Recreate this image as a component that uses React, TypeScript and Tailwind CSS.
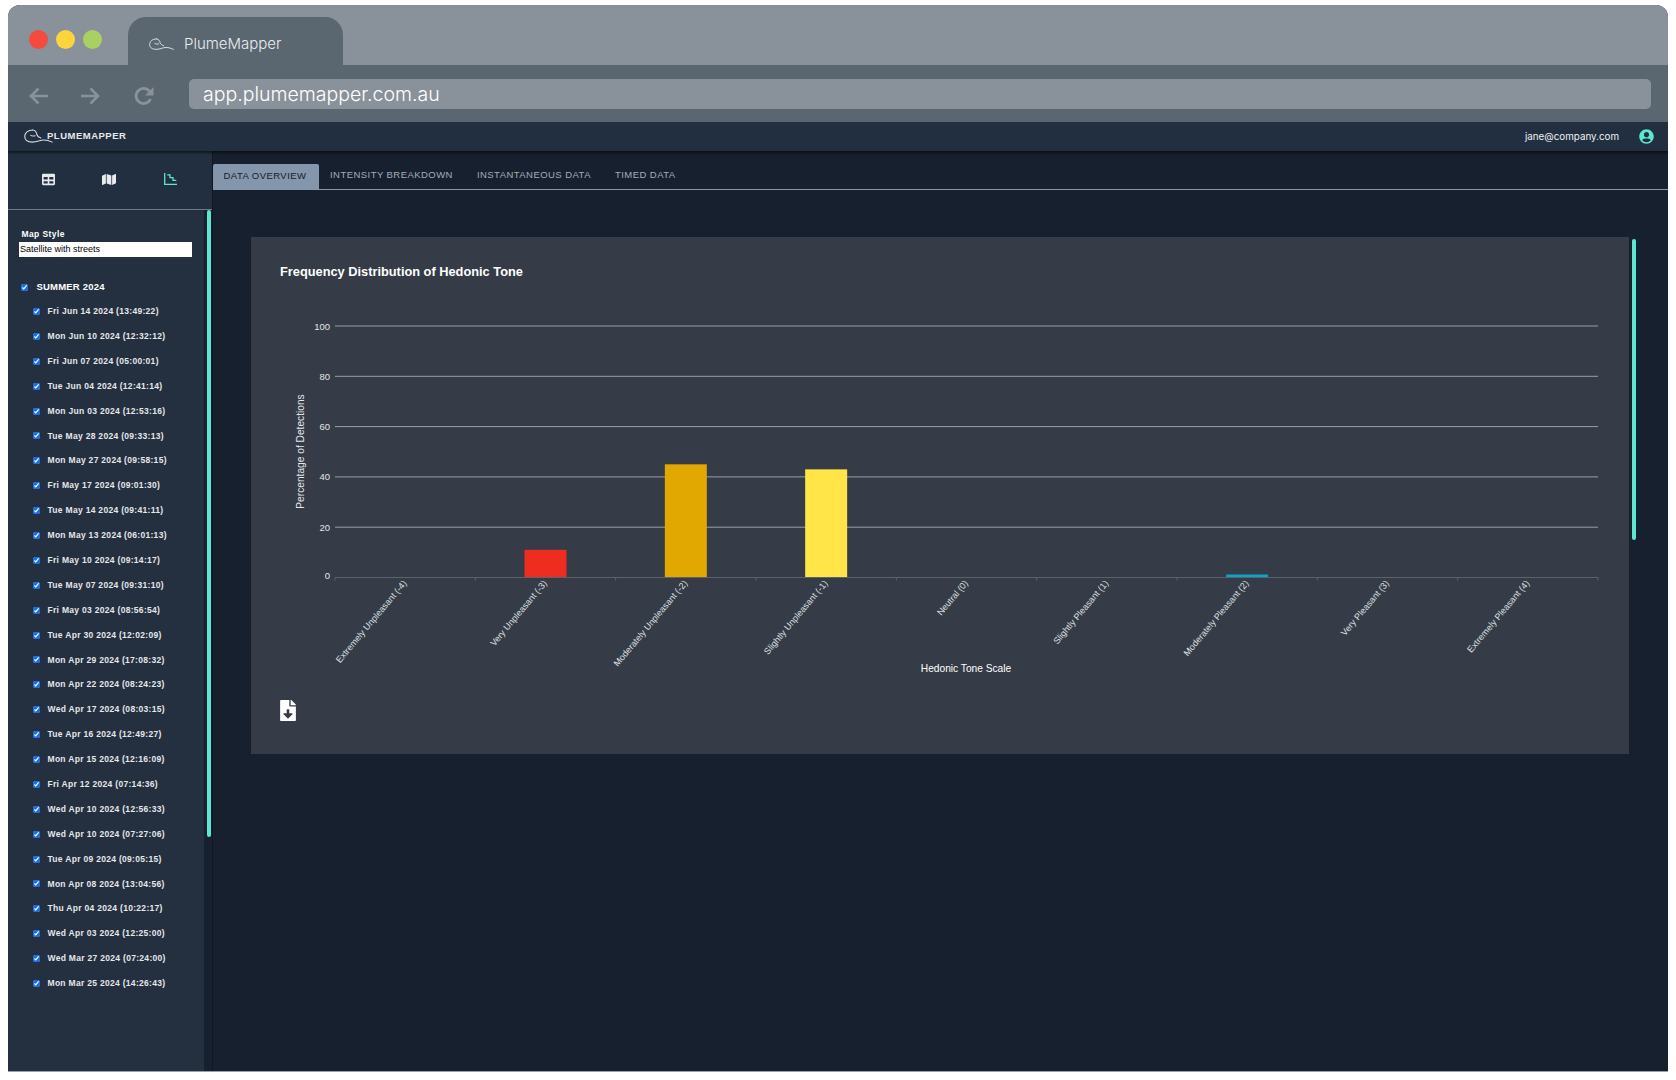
import React from "react";
import { FaTable, FaMap, FaFileDownload, FaUserCircle } from "react-icons/fa";

const dates = [
  "Fri Jun 14 2024 (13:49:22)",
  "Mon Jun 10 2024 (12:32:12)",
  "Fri Jun 07 2024 (05:00:01)",
  "Tue Jun 04 2024 (12:41:14)",
  "Mon Jun 03 2024 (12:53:16)",
  "Tue May 28 2024 (09:33:13)",
  "Mon May 27 2024 (09:58:15)",
  "Fri May 17 2024 (09:01:30)",
  "Tue May 14 2024 (09:41:11)",
  "Mon May 13 2024 (06:01:13)",
  "Fri May 10 2024 (09:14:17)",
  "Tue May 07 2024 (09:31:10)",
  "Fri May 03 2024 (08:56:54)",
  "Tue Apr 30 2024 (12:02:09)",
  "Mon Apr 29 2024 (17:08:32)",
  "Mon Apr 22 2024 (08:24:23)",
  "Wed Apr 17 2024 (08:03:15)",
  "Tue Apr 16 2024 (12:49:27)",
  "Mon Apr 15 2024 (12:16:09)",
  "Fri Apr 12 2024 (07:14:36)",
  "Wed Apr 10 2024 (12:56:33)",
  "Wed Apr 10 2024 (07:27:06)",
  "Tue Apr 09 2024 (09:05:15)",
  "Mon Apr 08 2024 (13:04:56)",
  "Thu Apr 04 2024 (10:22:17)",
  "Wed Apr 03 2024 (12:25:00)",
  "Wed Mar 27 2024 (07:24:00)",
  "Mon Mar 25 2024 (14:26:43)",
];

const categories = [
  "Extremely Unpleasant (-4)",
  "Very Unpleasant (-3)",
  "Moderately Unpleasant (-2)",
  "Slightly Unpleasant (-1)",
  "Neutral (0)",
  "Slightly Pleasant (1)",
  "Moderately Pleasant (2)",
  "Very Pleasant (3)",
  "Extremely Pleasant (4)",
];

const bars: { i: number; v: number; c: string }[] = [
  { i: 1, v: 11, c: "#ee2d20" },
  { i: 2, v: 45, c: "#e0a800" },
  { i: 3, v: 43, c: "#ffe548" },
  { i: 6, v: 1.2, c: "#08a6c9" },
];

const X0 = 335;
const X1 = 1598;
const Y0 = 577.5;
const STEP = (X1 - X0) / 9;
const yOf = (v: number) => Y0 - v * 2.515;

function Logo({ className }: { className: string }) {
  return (
    <svg viewBox="0 0 30 15" fill="none" stroke="currentColor" strokeWidth="1.1" strokeLinecap="round" className={className}>
      <path d="M9 .8C4 .8.8 3.800.8 7.500c0 4.200 3.700 5.800 8 5.800 4.800 0 7.500-2.200 11.700-2.200 3 0 5.800.8 8.700 2.200" />
      <path d="M9 .8c2.700.3 3.800 2.300 4.300 4.400.4 1.700 1.900 3 4.200 3.800" />
      <path d="M7 6.300c1 .7 2.800.9 4.500.5" />
    </svg>
  );
}

function AxisIcon() {
  return (
    <svg viewBox="0 0 13 12" className="w-[13px] h-[12px] text-[#5ee6d0]" fill="none" stroke="currentColor" strokeWidth="1.300">
      <path d="M.7 0v11.300H13" />
      <path d="M3.200 1.900h2.800v2.700h3v2.700h3.300" />
    </svg>
  );
}

function Chart() {
  return (
    <svg viewBox="251 300 1378 395" className="block w-[1378px] h-[395px]" style={{ fontFamily: '"Liberation Sans", Arial, sans-serif' }}>
      {[100, 80, 60, 40, 20].map((v) => (
        <g key={v}>
          <line x1={X0} x2={X1} y1={yOf(v)} y2={yOf(v)} stroke="#9aa0a8" strokeWidth="1" />
          <text x={330} y={yOf(v) + 3.5} textAnchor="end" fontSize="9.5" fill="#e4e6e9">{v}</text>
        </g>
      ))}
      <text x={330} y={Y0 + 1} textAnchor="end" fontSize="9.5" fill="#e4e6e9">0</text>
      <text x={0} y={0} transform="translate(304 451.5) rotate(-90)" textAnchor="middle" fontSize="10.2" fill="#e4e6e9">Percentage of Detections</text>
      {bars.map((b) => (
        <rect key={b.i} x={X0 + (b.i + 0.5) * STEP - 21} y={yOf(b.v)} width={42} height={Y0 - yOf(b.v)} fill={b.c} />
      ))}
      <line x1={X0} x2={X1} y1={Y0} y2={Y0} stroke="#5c626c" strokeWidth="1" />
      {Array.from({ length: 10 }).map((_, i) => (
        <line key={i} x1={X0 + i * STEP} x2={X0 + i * STEP} y1={Y0} y2={Y0 + 3} stroke="#5c626c" strokeWidth="1" />
      ))}
      {categories.map((c, i) => {
        const x = X0 + (i + 0.5) * STEP + 2;
        return (
          <text key={c} x={0} y={0} transform={`translate(${x} 583.5) rotate(-50)`} textAnchor="end" fontSize="9" fill="#dfe1e4">
            {c}
          </text>
        );
      })}
      <text x={966} y={671.5} textAnchor="middle" fontSize="10.2" fill="#ffffff">Hedonic Tone Scale</text>
    </svg>
  );
}

export default function App() {
  return (
    <div className="w-[1676px] h-[1080px] bg-white pl-2 pt-[5px] overflow-hidden font-['Liberation_Sans',Arial,sans-serif]">
      <div className="w-[1660px] h-[1067px] flex flex-col rounded-t-xl overflow-hidden bg-[#17202e] border-b border-[#9aa0a8]">
        {/* Tab strip */}
        <div className="h-[60px] shrink-0 bg-[#89919a] flex items-end relative">
          <div className="flex gap-[8px] ml-[21px] mb-[16px]">
            <span className="w-[19px] h-[19px] rounded-full bg-[#f44b3d]" />
            <span className="w-[19px] h-[19px] rounded-full bg-[#fed33c]" />
            <span className="w-[19px] h-[19px] rounded-full bg-[#a8d162]" />
          </div>
          <div className="ml-[26px] w-[215px] h-[48px] bg-[#5a6670] rounded-t-[18px] flex items-center pl-[21px] pt-[6px] text-[#e8ecef]">
            <Logo className="w-[25px] h-[13px]" />
            <span className="ml-[10px] text-[15px] font-['Inter',sans-serif] font-light">PlumeMapper</span>
          </div>
        </div>
        {/* Toolbar */}
        <div className="h-[57px] shrink-0 bg-[#5a6670] flex items-center">
          <div className="flex items-center ml-[21px] text-[#8a9298] mt-[5px]">
            <svg viewBox="0 0 20 20" className="w-[20px] h-[20px]" fill="none" stroke="currentColor" strokeWidth="2.6"><path d="M19 10H2M9.500 2.500 2 10l7.500 7.500" /></svg>
            <svg viewBox="0 0 20 20" className="w-[20px] h-[20px] ml-[31px]" fill="none" stroke="currentColor" strokeWidth="2.6"><path d="M1 10h17M10.500 2.500 18 10l-7.500 7.500" /></svg>
            <svg viewBox="0 0 20 20" className="w-[20px] h-[20px] ml-[34px]" fill="none"><path d="M16.500 13a7.500 7.500 0 1 1-.6-7.200" stroke="currentColor" strokeWidth="2.8" /><path d="M19.500 1v8.500H11z" fill="currentColor" /></svg>
          </div>
          <div className="ml-[35px] w-[1462px] h-[30px] bg-[#89919a] rounded-[5px] flex items-center pl-[14px] text-white text-[19.5px] font-['Inter',sans-serif] font-light pt-[3px]">
            app.plumemapper.com.au
          </div>
        </div>
        {/* App header */}
        <div className="h-[29px] shrink-0 bg-[#222f40] flex items-center pl-[16px] pr-[14px] shadow-[0_2px_2px_rgba(0,0,0,0.5)] relative z-10 text-white">
          <Logo className="w-[29px] h-[15px] text-[#d9dde1]" />
          <span className="-ml-[6px] -mt-[1px] text-[9.5px] font-bold tracking-[0.5px] text-[#e6e9ec]">PLUMEMAPPER</span>
          <span className="ml-auto mt-[2px] text-[9.8px] font-['Inter',sans-serif] text-[#f0f1f3]">jane@company.com</span>
          <FaUserCircle className="ml-[20px] w-[15px] h-[15px] text-[#5ee6d0] -mt-[1px]" />
        </div>
        {/* Body */}
        <div className="flex-1 flex min-h-0">
          {/* Sidebar */}
          <aside className="w-[204px] shrink-0 flex flex-col bg-[#222f40]">
            <div className="h-[59px] shrink-0 border-b border-[#6f7a86] flex items-start pt-[22px] text-white">
              <FaTable className="ml-[34px] w-[13px] h-[13px] text-[#e8eaec]" />
              <FaMap className="ml-[47px] w-[14px] h-[13px] text-[#e8eaec]" />
              <span className="ml-[48px]"><AxisIcon /></span>
            </div>
            <div className="flex-1 flex min-h-0">
              <div className="w-[196px] shrink-0 bg-[#242f40] pl-[11px] pt-[19px]">
                <div className="pl-[2.5px] text-[8.5px] font-bold tracking-[0.4px] text-white leading-[11px]">Map Style</div>
                <div className="mt-[2px] w-[173px] h-[15px] bg-white text-black text-[9px] leading-[14px] pl-[1px]">Satellite with streets</div>
                <label className="mt-[23px] ml-[2px] flex items-center h-[14px] text-[9.5px] font-bold text-white tracking-[0.2px]">
                  <input type="checkbox" defaultChecked className="w-[7px] h-[7px] m-0 accent-[#1a6fe8]" />
                  <span className="ml-[8.5px]">SUMMER 2024</span>
                </label>
                <ul className="mt-[5px]">
                  {dates.map((d, i) => (
                    <li key={i} className="h-[24.9px] flex items-center ml-[14px]">
                      <input type="checkbox" defaultChecked className="w-[7px] h-[7px] m-0 accent-[#1a6fe8]" />
                      <span className="ml-[7.5px] text-[8.5px] font-bold text-[#e6e8ea] tracking-[0.3px]">{d}</span>
                    </li>
                  ))}
                </ul>
              </div>
              <div className="w-[8px] shrink-0 bg-[#17202e] pl-[2.5px]">
                <div className="w-[4px] h-[627px] bg-[#5ee6d0] rounded-full" />
              </div>
            </div>
          </aside>
          {/* Main */}
          <main className="flex-1 min-w-0 border-l border-[#10171f]">
            <div className="h-[39px] flex items-end border-b border-[#8a96a4]">
              <div className="h-[26px] w-[106px] pb-[2px] pr-[2px] bg-[#8496ab] rounded-t-[2px] flex items-center justify-center text-[9.5px] tracking-[0.45px] text-[#17202e] -mb-px">DATA OVERVIEW</div>
              <div className="ml-[11px] h-[26px] pb-[2px] flex items-center text-[9.5px] tracking-[0.45px] text-[#a4adb8]">INTENSITY BREAKDOWN</div>
              <div className="ml-[24px] h-[26px] pb-[2px] flex items-center text-[9.5px] tracking-[0.45px] text-[#a4adb8]">INSTANTANEOUS DATA</div>
              <div className="ml-[24px] h-[26px] pb-[2px] flex items-center text-[9.5px] tracking-[0.45px] text-[#a4adb8]">TIMED DATA</div>
            </div>
            <div className="flex items-start pl-[38px] pt-[47px]">
              <section className="w-[1378px] h-[517px] bg-[#353b47] pt-[26px]">
                <h2 className="pl-[29px] text-[12.8px] leading-[18px] font-bold text-white">Frequency Distribution of Hedonic Tone</h2>
                <div className="mt-[19px]"><Chart /></div>
                <FaFileDownload className="ml-[29px] mt-[5px] w-[16px] h-[21px] text-white" />
              </section>
              <div className="ml-[2.5px] mt-[2px] w-[4px] h-[301px] bg-[#5ee6d0] rounded-full" />
            </div>
          </main>
        </div>
      </div>
    </div>
  );
}
